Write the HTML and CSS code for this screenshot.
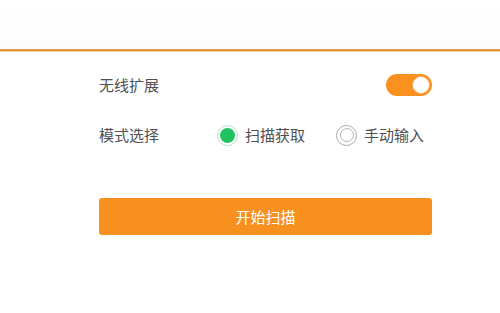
FILE: index.html
```html
<!DOCTYPE html>
<html lang="zh">
<head>
<meta charset="utf-8">
<link rel="stylesheet" href="styles.css">
</head>
<body>
<div class="topbar"></div>
<div class="form">
  <div class="row">
    <span class="label">无线扩展</span>
    <span class="toggle"><span class="knob"></span></span>
  </div>
  <div class="row">
    <span class="label label-fixed">模式选择</span>
    <div class="radios">
      <span class="radio-item"><span class="radio checked"><span class="dot"></span></span>扫描获取</span>
      <span class="radio-item"><span class="radio"><span class="dot"></span></span>手动输入</span>
    </div>
  </div>
  <button class="btn">开始扫描</button>
</div>
</body>
</html>
```
FILE: styles.css
```css
html, body {
  margin: 0;
  padding: 0;
  background: #fff;
  font-family: "Noto Sans CJK SC", "Microsoft YaHei", sans-serif;
  color: #505050;
  font-size: 15px;
}
.topbar {
  height: 49px;
  background: linear-gradient(#fff, #fbfdfb);
  border-bottom: 2px solid #e0953f;
  box-shadow: 0 1px 0 #f4d0a0;
}
.form {
  width: 333px;
  margin-left: 99px;
  padding-top: 19px;
  display: flex;
  flex-direction: column;
}
.row {
  height: 30px;
  display: flex;
  align-items: center;
  justify-content: space-between;
  margin-bottom: 20px;
}
.label {
  line-height: 30px;
}
.label-fixed {
  width: 118px;
  flex: none;
}
.toggle {
  width: 46px;
  height: 22px;
  border-radius: 11px;
  background: #f8911f;
  display: flex;
  align-items: center;
  justify-content: flex-end;
  padding-right: 2px;
  box-sizing: border-box;
}
.knob {
  width: 18px;
  height: 18px;
  border-radius: 50%;
  background: #fff;
  box-sizing: border-box;
  border: 1.5px solid #f4b064;
}
.radios {
  flex: 1;
  display: flex;
  align-items: center;
  gap: 31px;
}
.radio-item {
  display: flex;
  align-items: center;
  gap: 7px;
  line-height: 30px;
}
.radio {
  width: 21px;
  height: 21px;
  border-radius: 50%;
  box-sizing: border-box;
  border: 1.5px solid #a9a9a9;
  display: flex;
  align-items: center;
  justify-content: center;
  background: #fff;
}
.radio .dot {
  width: 14px;
  height: 14px;
  border-radius: 50%;
  box-sizing: border-box;
  border: 1.5px solid #b5b5b5;
}
.radio.checked {
  border-color: #b3e2c2;
}
.radio.checked .dot {
  width: 15px;
  height: 15px;
  border: none;
  background: #22c162;
}
.btn {
  margin-top: 28px;
  height: 37px;
  width: 333px;
  border: none;
  border-radius: 3px;
  background: #f8901f;
  color: #fff;
  font-family: "Noto Sans CJK SC", "Microsoft YaHei", sans-serif;
  font-size: 15px;
  padding: 0;
}
```
